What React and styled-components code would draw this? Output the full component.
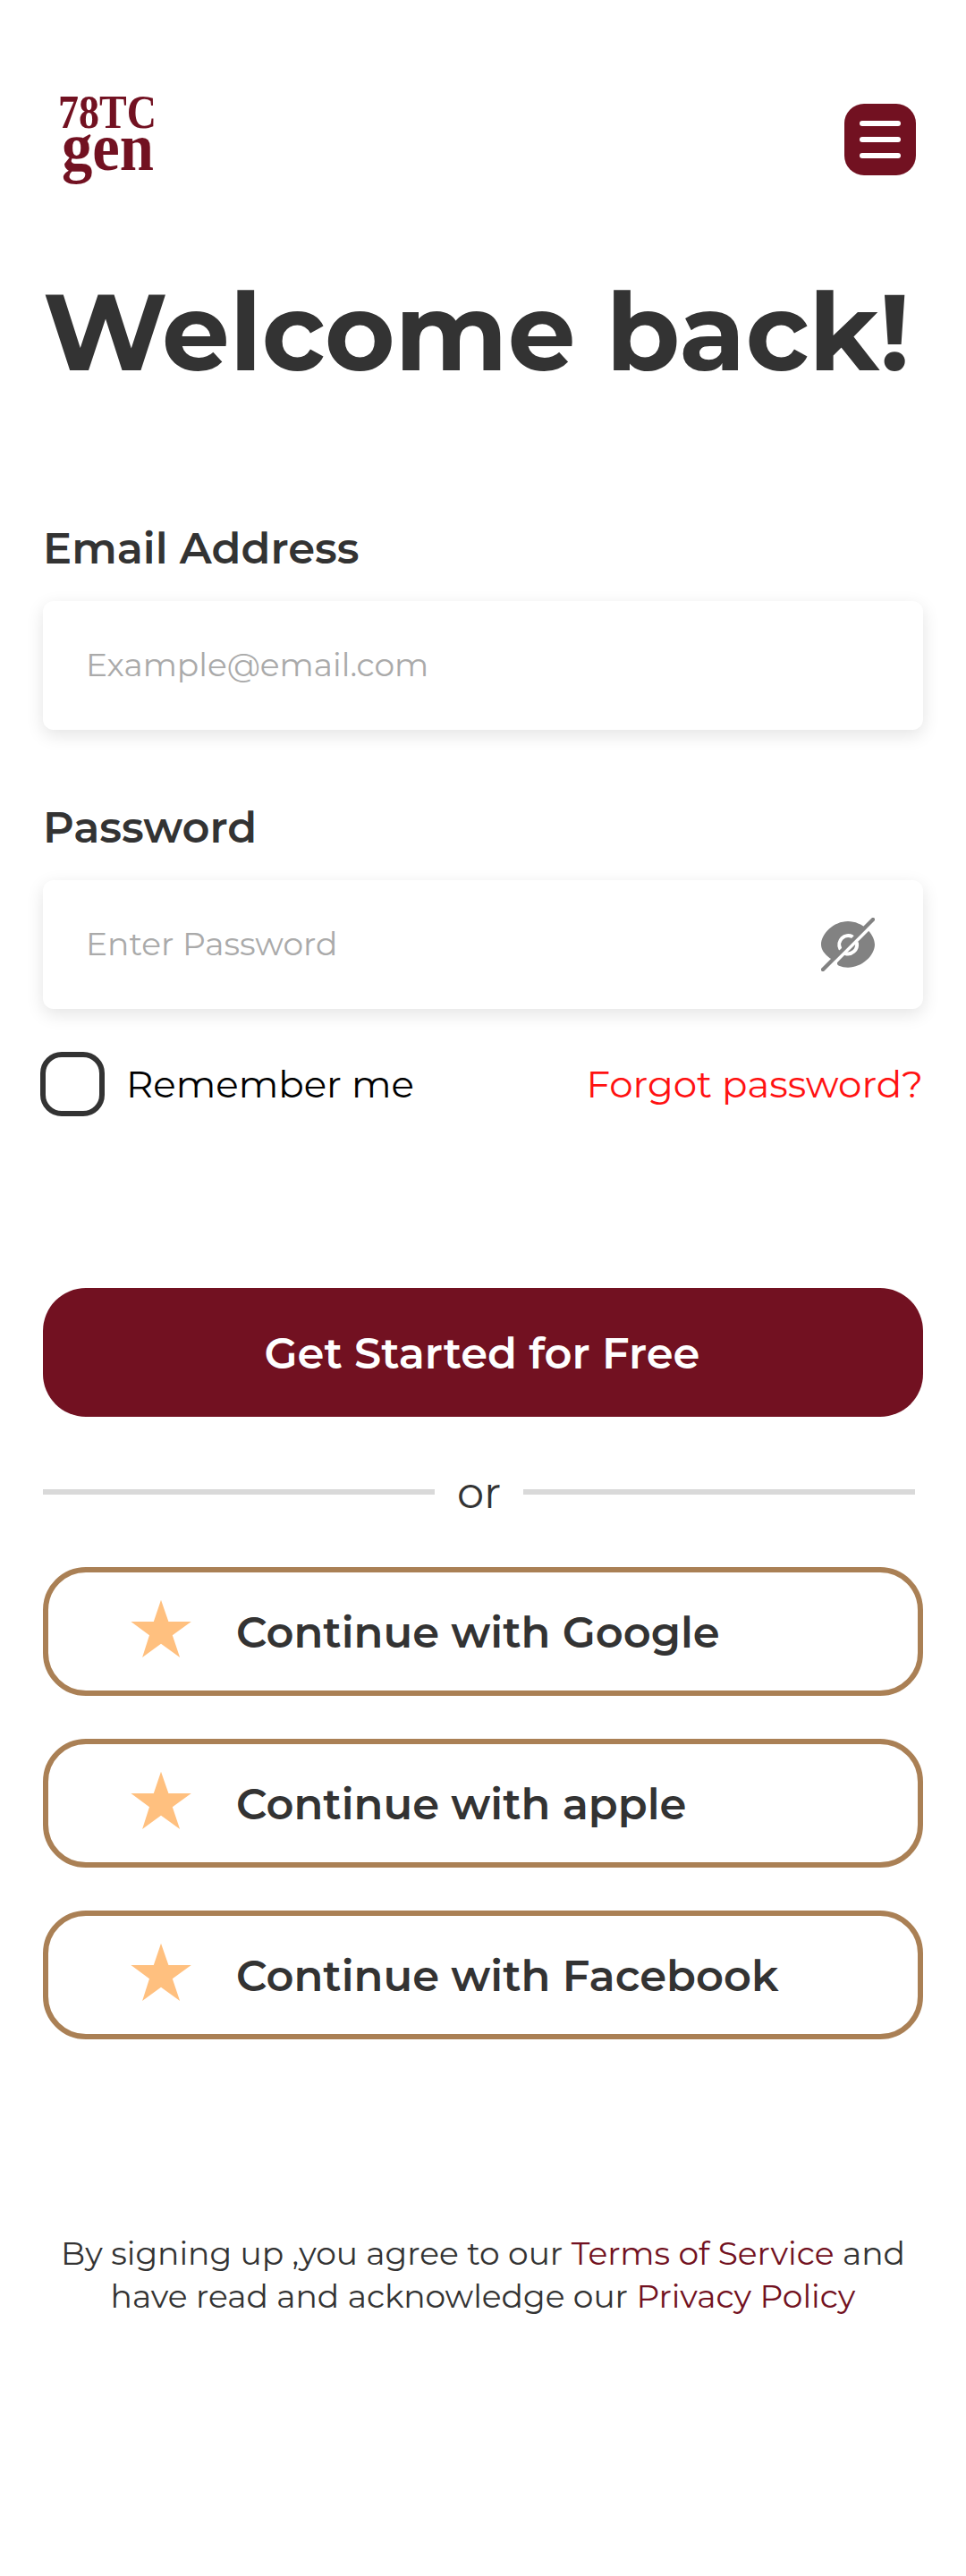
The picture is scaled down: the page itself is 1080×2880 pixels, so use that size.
import React from "react";
import styled, { createGlobalStyle } from "styled-components";

const maroon = "#721121";
const ink = "#333333";
const white = "#ffffff";

const GlobalStyle = createGlobalStyle`
  *, *::before, *::after { box-sizing: border-box; }
  body {
    margin: 0;
    background: ${white};
    color: ${ink};
    font-family: Montserrat, Inter, "Open Sans", sans-serif;
  }
`;

const Page = styled.main`
  width: 1080px;
  min-height: 2880px;
  padding: 108px 48px 0;
  display: flex;
  flex-direction: column;
`;

const Header = styled.header`
  height: 96px;
  padding: 0 8px 0 16px;
  display: flex;
  align-items: center;
  justify-content: space-between;
`;

const LogoMark = styled.svg`
  width: 112px;
  height: 100px;
  overflow: visible;
  fill: ${maroon};
  font-family: "Liberation Serif", serif;
  font-weight: 700;
`;

const MenuButton = styled.button`
  width: 80px;
  height: 80px;
  padding: 0;
  border: 0;
  border-radius: 22px;
  background: ${maroon};
  display: flex;
  flex-direction: column;
  align-items: center;
  justify-content: center;
  gap: 12px;
`;

const MenuBar = styled.span`
  width: 46px;
  height: 6px;
  border-radius: 3px;
  background: ${white};
`;

const Title = styled.h1`
  margin: 94px 0 0;
  font-size: 120px;
  line-height: 146px;
  font-weight: 700;
  white-space: nowrap;
`;

const Fields = styled.div`
  margin-top: 140px;
  display: flex;
  flex-direction: column;
  gap: 80px;
`;

const Field = styled.label`
  display: flex;
  flex-direction: column;
  gap: 30px;
`;

const FieldLabel = styled.span`
  font-size: 48px;
  line-height: 58px;
  font-weight: 600;
`;

const InputBox = styled.span`
  height: 144px;
  padding: 0 54px 0 48px;
  border-radius: 12px;
  background: ${white};
  box-shadow: 0 6px 20px rgba(0, 0, 0, 0.11);
  display: flex;
  align-items: center;
`;

const Input = styled.input`
  flex: 1;
  min-width: 0;
  height: 44px;
  margin-bottom: 2px;
  padding: 0;
  border: 0;
  outline: 0;
  background: transparent;
  font: 400 36px/44px Montserrat, Inter, "Open Sans", sans-serif;
  color: ${ink};
  &::placeholder { color: #aaaaaa; opacity: 1; }
`;

const EyeIcon = styled.svg`
  width: 60px;
  height: 60px;
`;

const OptionsRow = styled.div`
  margin: 48px 0 0 -3px;
  height: 72px;
  display: flex;
  align-items: center;
  justify-content: space-between;
  font-size: 42px;
  line-height: 52px;
`;

const Remember = styled.label`
  display: flex;
  align-items: center;
  gap: 24px;
  color: #000;
`;

const Checkbox = styled.input`
  appearance: none;
  width: 72px;
  height: 72px;
  margin: 0;
  border: 6px solid ${ink};
  border-radius: 24px;
`;

const ForgotLink = styled.a`
  color: #ff1111;
`;

const PrimaryButton = styled.button`
  margin-top: 192px;
  height: 144px;
  padding: 2px 2px 0 0;
  border: 0;
  border-radius: 48px;
  background: ${maroon};
  color: ${white};
  font: 600 48px/58px Montserrat, Inter, "Open Sans", sans-serif;
`;

const Divider = styled.div`
  margin-top: 56px;
  width: 975px;
  height: 58px;
  display: flex;
  align-items: center;
  font-size: 48px;
  line-height: 58px;
`;

const Rule = styled.span`
  flex: 1;
  height: 6px;
  margin-bottom: 2px;
  background: #d9d9d9;
`;

const Or = styled.span`
  width: 99px;
  padding-left: 25px;
`;

const SocialList = styled.div`
  margin-top: 54px;
  display: flex;
  flex-direction: column;
  gap: 48px;
`;

const SocialButton = styled.button`
  height: 144px;
  padding: 0 0 0 92px;
  border: 6px solid #aa8055;
  border-radius: 48px;
  background: ${white};
  color: ${ink};
  display: flex;
  align-items: center;
  gap: 50px;
  font: 600 48px/58px Montserrat, Inter, "Open Sans", sans-serif;
`;

const SocialText = styled.span`
  padding-top: 2px;
`;

const Star = styled.svg`
  width: 68px;
  height: 66px;
  margin-bottom: 6px;
  fill: #ffc07f;
`;

const Legal = styled.p`
  margin: 215px 0 0;
  font-size: 36px;
  line-height: 48px;
  text-align: center;
  white-space: nowrap;
`;

const LegalLink = styled.a`
  color: ${maroon};
`;

function Logo() {
  return (
    <LogoMark viewBox="0 0 112 100" role="img" aria-label="78TC gen">
      <text>
        <tspan x="1" y="36.500" fontSize="53" textLength="110" lengthAdjust="spacingAndGlyphs">78TC</tspan>
        <tspan x="5" y="83.500" fontSize="76" textLength="103" lengthAdjust="spacingAndGlyphs">gen</tspan>
      </text>
    </LogoMark>
  );
}

function EyeSlash() {
  return (
    <EyeIcon viewBox="0 0 60 60" fill="none" strokeLinecap="round">
      <path
        d="M30 4C46 4 60 18 60 30S46 55.700 30 55.700C26.500 55.700 23 55 20 53.800C17.500 52.500 17.500 50 19 48.500L10 45.500C3.500 40.500 0 35.500 0 30C0 18 14 4 30 4Z"
        fill="#828282"
      />
      <path d="M21.300 34.500A10 10 0 0 1 35 21.300" stroke={white} strokeWidth="4" />
      <path d="M40 28.500A10.300 10.300 0 0 1 27 40" stroke={white} strokeWidth="4" />
      <path d="M8 57.300L60 5.300" stroke={white} strokeWidth="3.800" />
      <path d="M2 58L58 2" stroke="#828282" strokeWidth="4.300" />
    </EyeIcon>
  );
}

const providers = ["Google", "apple", "Facebook"];

export default function App() {
  return (
    <>
      <GlobalStyle />
      <Page>
        <Header>
          <Logo />
          <MenuButton aria-label="Menu">
            <MenuBar />
            <MenuBar />
            <MenuBar />
          </MenuButton>
        </Header>
        <Title>Welcome back!</Title>
        <Fields>
          <Field>
            <FieldLabel>Email Address</FieldLabel>
            <InputBox>
              <Input type="email" placeholder="Example@email.com" />
            </InputBox>
          </Field>
          <Field>
            <FieldLabel>Password</FieldLabel>
            <InputBox>
              <Input type="password" placeholder="Enter Password" />
              <EyeSlash />
            </InputBox>
          </Field>
        </Fields>
        <OptionsRow>
          <Remember>
            <Checkbox type="checkbox" />
            Remember me
          </Remember>
          <ForgotLink>Forgot password?</ForgotLink>
        </OptionsRow>
        <PrimaryButton>Get Started for Free</PrimaryButton>
        <Divider>
          <Rule />
          <Or>or</Or>
          <Rule />
        </Divider>
        <SocialList>
          {providers.map((name) => (
            <SocialButton key={name}>
              <Star viewBox="0 0 68 66">
                <path d="M34 .7L42.400 25H67.800L46.800 40.300L55.100 65L34 49.700L13.100 65L21 40.300L.4 25H25.800Z" />
              </Star>
              <SocialText>Continue with {name}</SocialText>
            </SocialButton>
          ))}
        </SocialList>
        <Legal>
          By signing up ,you agree to our <LegalLink>Terms of Service</LegalLink> and
          <br />
          have read and acknowledge our <LegalLink>Privacy Policy</LegalLink>
        </Legal>
      </Page>
    </>
  );
}
